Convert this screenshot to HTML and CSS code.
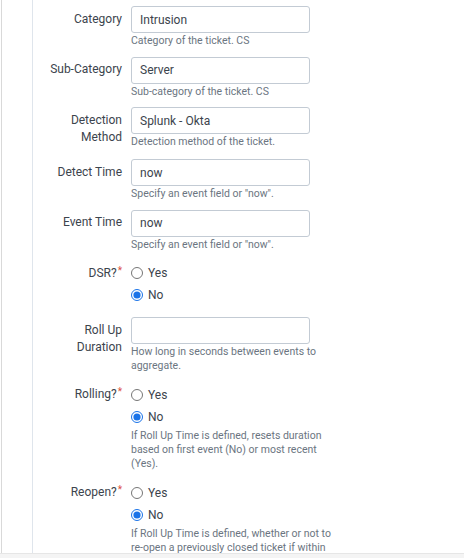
FILE: index.html
```html
<!DOCTYPE html>
<html>
<head>
<meta charset="utf-8">
<link rel="stylesheet" href="styles.css">
</head>
<body>
<div class="page">
  <div class="panel">
    <div class="form">
      <div class="row">
        <label class="label">Category</label>
        <div class="control">
          <input class="input" type="text" value="Intrusion">
          <div class="help">Category of the ticket. CS</div>
        </div>
      </div>
      <div class="row">
        <label class="label">Sub-Category</label>
        <div class="control">
          <input class="input" type="text" value="Server">
          <div class="help">Sub-category of the ticket. CS</div>
        </div>
      </div>
      <div class="row">
        <label class="label">Detection<br>Method</label>
        <div class="control">
          <input class="input" type="text" value="Splunk - Okta">
          <div class="help">Detection method of the ticket.</div>
        </div>
      </div>
      <div class="row">
        <label class="label">Detect Time</label>
        <div class="control">
          <input class="input" type="text" value="now">
          <div class="help">Specify an event field or "now".</div>
        </div>
      </div>
      <div class="row">
        <label class="label">Event Time</label>
        <div class="control">
          <input class="input" type="text" value="now">
          <div class="help">Specify an event field or "now".</div>
        </div>
      </div>
      <div class="row">
        <label class="label">DSR?<sup class="req">*</sup></label>
        <div class="control">
          <div class="radios radios-solo">
            <label class="radio"><input type="radio" name="dsr"><span>Yes</span></label>
            <label class="radio"><input type="radio" name="dsr" checked><span>No</span></label>
          </div>
        </div>
      </div>
      <div class="row">
        <label class="label">Roll Up<br>Duration</label>
        <div class="control">
          <input class="input" type="text" value="">
          <div class="help">How long in seconds between events to<br>aggregate.</div>
        </div>
      </div>
      <div class="row">
        <label class="label">Rolling?<sup class="req">*</sup></label>
        <div class="control">
          <div class="radios">
            <label class="radio"><input type="radio" name="rolling"><span>Yes</span></label>
            <label class="radio"><input type="radio" name="rolling" checked><span>No</span></label>
          </div>
          <div class="help">If Roll Up Time is defined, resets duration<br>based on first event (No) or most recent<br>(Yes).</div>
        </div>
      </div>
      <div class="row">
        <label class="label">Reopen?<sup class="req">*</sup></label>
        <div class="control">
          <div class="radios">
            <label class="radio"><input type="radio" name="reopen"><span>Yes</span></label>
            <label class="radio"><input type="radio" name="reopen" checked><span>No</span></label>
          </div>
          <div class="help">If Roll Up Time is defined, whether or not to<br>re-open a previously closed ticket if within<br>the roll up duration.</div>
        </div>
      </div>
    </div>
  </div>
</div>
</body>
</html>
```
FILE: styles.css
```css
html, body {
  margin: 0;
  padding: 0;
}
body {
  background: #f4f4f4;
  font-family: Roboto, "Liberation Sans", Arial, sans-serif;
  color: #3c444d;
}
.page {
  height: 553px;
  background: #ffffff;
  border-bottom: 1px solid #e6e6e6;
  overflow: hidden;
}
.panel {
  margin-left: 1px;
  height: 100%;
  border-left: 1px solid #d9d9d9;
  padding-left: 30px;
}
.form {
  height: 100%;
  border-left: 1px solid #dfe5ec;
  padding-top: 6px;
  box-sizing: border-box;
}
.row {
  display: flex;
  align-items: flex-start;
  margin-bottom: 8.7px;
}
.label {
  width: 89px;
  padding: 4.5px 9px 4.5px 0;
  text-align: right;
  font-size: 12px;
  line-height: 17px;
  color: #3c444d;
}
.req {
  color: #dc4e41;
  font-size: 10px;
  vertical-align: top;
  line-height: 12px;
  margin-left: 1px;
}
.control {
  display: flex;
  flex-direction: column;
}
.input {
  box-sizing: border-box;
  width: 179px;
  height: 27px;
  margin: 0;
  padding: 0 8px;
  border: 1px solid #c3cbd4;
  border-radius: 3px;
  font-family: Roboto, "Liberation Sans", Arial, sans-serif;
  font-size: 12px;
  color: #3c444d;
  background: #fff;
  outline: none;
}
.help {
  margin-top: 1px;
  font-size: 10.5px;
  line-height: 14px;
  color: #6b7581;
  white-space: nowrap;
}
.radios {
  display: flex;
  flex-direction: column;
  padding-top: 2px;
}
.radios-solo {
  padding-bottom: 2px;
}
.radio {
  display: flex;
  align-items: center;
  height: 22px;
  font-size: 12px;
  color: #3c444d;
}
.radio input {
  width: 12px;
  height: 12px;
  margin: 0 5px 0 0;
  accent-color: #1a73e8;
}
```
